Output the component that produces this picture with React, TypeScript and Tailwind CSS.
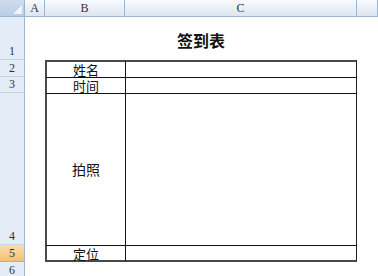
const colHead = "flex items-center justify-center border-r border-b border-[#9eb6ce] bg-gradient-to-b from-[#f8fafd] to-[#dde6f2] text-[12px] text-[#333] [font-family:'Liberation_Serif',serif]";
const rowHead = "flex items-end justify-center border-r border-b border-r-[#9eb6ce] border-b-[#c5d3e6] bg-[#e4ecf7] text-[12px] leading-[15px] text-[#333] [font-family:'Liberation_Serif',serif]";
const cellText = "[font-family:'Noto_Sans_CJK_SC',sans-serif] text-[14px] text-[#111]";
const smallText = "[font-family:'Noto_Sans_CJK_SC',sans-serif] text-[13px] leading-[13px] text-[#111]";

export default function App() {
  return (
    <div className="w-[378px] h-[276px] overflow-hidden bg-white">
      <div className="grid grid-cols-[25px_20px_80px_232px_1fr] grid-rows-[17px_43px_17px_16px_152px_17px_1fr] h-full">
        {/* header row */}
        <div className="relative border-r border-b border-[#9eb6ce] bg-gradient-to-b from-[#cfdcef] to-[#b9cce6]">
          <div className="absolute right-[2px] bottom-[2px] w-0 h-0 border-l-[9px] border-l-transparent border-b-[9px] border-b-[#f2f6fb]" />
        </div>
        <div className={colHead}>A</div>
        <div className={colHead}>B</div>
        <div className={colHead}>C</div>
        <div className={colHead}></div>

        {/* row 1 */}
        <div className={rowHead}>1</div>
        <div></div>
        <div className="col-span-2 flex items-center justify-center pt-[2px]">
          <span className="[font-family:'Noto_Sans_CJK_SC',sans-serif] text-[16px] font-bold text-[#111]">签到表</span>
        </div>
        <div></div>

        {/* row 2 */}
        <div className={rowHead}>2</div>
        <div></div>
        <div className={`flex items-center justify-center border-t-2 border-l-2 border-t-[#4a4a4a] border-l-[#4a4a4a] ${smallText}`}>姓名</div>
        <div className="border-t-2 border-l border-r border-t-[#4a4a4a] border-l-[#111] border-r-[#222]"></div>
        <div></div>

        {/* row 3 */}
        <div className={rowHead}>3</div>
        <div></div>
        <div className={`flex items-center justify-center border-t border-l-2 border-t-[#111] border-l-[#4a4a4a] ${smallText}`}>时间</div>
        <div className="border-t border-l border-r border-t-[#111] border-l-[#111] border-r-[#222]"></div>
        <div></div>

        {/* row 4 */}
        <div className={rowHead}>4</div>
        <div></div>
        <div className={`flex items-center justify-center border-t border-l-2 border-t-[#111] border-l-[#4a4a4a] ${cellText}`}>拍照</div>
        <div className="border-t border-l border-r border-t-[#111] border-l-[#111] border-r-[#222]"></div>
        <div></div>

        {/* row 5 */}
        <div className="flex items-end justify-center border-r border-b border-r-[#9eb6ce] border-b-[#e0a85a] bg-gradient-to-b from-[#fbdca8] to-[#f5c073] text-[12px] leading-[15px] text-[#333] [font-family:'Liberation_Serif',serif]">5</div>
        <div></div>
        <div className={`flex items-center justify-center border-t border-l-2 border-b-2 border-t-[#111] border-l-[#4a4a4a] border-b-[#4a4a4a] ${smallText}`}>定位</div>
        <div className="border-t border-l border-r border-b-2 border-t-[#111] border-l-[#111] border-r-[#222] border-b-[#4a4a4a]"></div>
        <div></div>

        {/* row 6 */}
        <div className="flex items-start justify-center border-r border-r-[#9eb6ce] bg-[#e4ecf7] pt-[2px] text-[12px] leading-[12px] text-[#333] [font-family:'Liberation_Serif',serif]">6</div>
        <div></div>
        <div></div>
        <div></div>
        <div></div>
      </div>
    </div>
  );
}
